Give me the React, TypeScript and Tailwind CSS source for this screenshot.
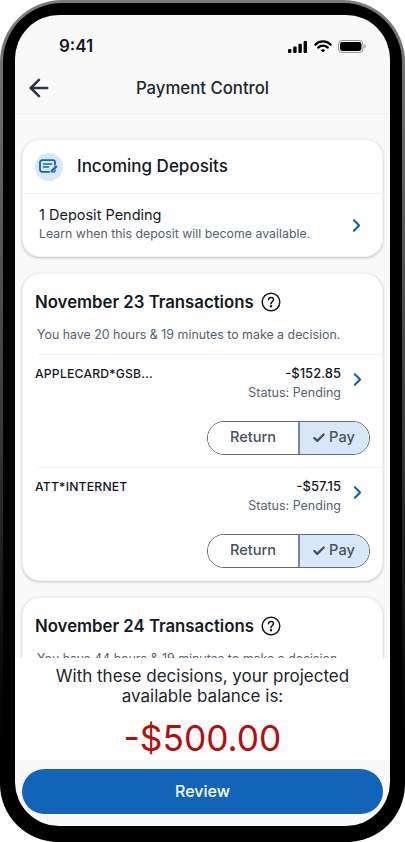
import { ArrowLeft, ChevronRight, Check } from 'lucide-react';

function StatusIcons() {
  return (
    <div className="flex items-center gap-[6px]">
      <svg width="20" height="12" viewBox="0 0 20 12" fill="#000">
        <rect x="0" y="8" width="3.4" height="4" rx="1" />
        <rect x="5.2" y="5.6" width="3.4" height="6.4" rx="1" />
        <rect x="10.4" y="2.8" width="3.4" height="9.2" rx="1" />
        <rect x="15.6" y="0" width="3.4" height="12" rx="1" />
      </svg>
      <svg width="18" height="13" viewBox="0 0 18 13" fill="none" stroke="#000" strokeWidth="2.2" strokeLinecap="round">
        <path d="M1.4 4.6C5.6 0.4 12.4 0.4 16.6 4.6" />
        <path d="M4.2 7.6C6.9 5 11.1 5 13.8 7.6" />
        <path d="M7.3 10.3 9 12 10.7 10.3C9.8 9.4 8.2 9.4 7.3 10.3Z" fill="#000" strokeWidth="1" />
      </svg>
      <svg width="28" height="13" viewBox="0 0 28 13" fill="none">
        <rect x="0.5" y="0.5" width="24.5" height="12" rx="3.6" stroke="#000" strokeOpacity="0.4" />
        <rect x="2" y="2" width="21.5" height="9" rx="2.4" fill="#000" />
        <path d="M26.4 4.6v3.8c.8-.3 1.3-1.1 1.3-1.9s-.5-1.6-1.3-1.9Z" fill="#000" fillOpacity="0.45" />
      </svg>
    </div>
  );
}

function DepositIcon() {
  return (
    <svg width="20" height="16" viewBox="0 0 20 16" fill="none">
      <rect x="1" y="1.2" width="15" height="11.6" rx="2" stroke="#1264b8" strokeWidth="1.8" />
      <path d="M4 5h9M4 8h6" stroke="#1264b8" strokeWidth="1.6" />
      <path d="M11 13.6l.6-2.6 5.4-5.2 2 2-5.4 5.2-2.6.6Z" fill="#1264b8" stroke="#d9e8f9" strokeWidth="0.7" />
    </svg>
  );
}

function HelpIcon() {
  return (
    <svg width="20" height="20" viewBox="0 0 20 20" fill="none" stroke="#14191f" strokeWidth="1.5" strokeLinecap="round">
      <circle cx="10" cy="10" r="8.8" />
      <path d="M7.5 7.8C7.6 6.4 8.7 5.6 10 5.6c1.4 0 2.5.9 2.5 2.2 0 1.9-2.5 1.9-2.5 3.9" />
      <circle cx="10" cy="14.3" r="0.5" fill="#14191f" />
    </svg>
  );
}

function Txn({ name, amount }: { name: string; amount: string }) {
  return (
    <div className="ml-[15px] border-t border-[#f0f1f2] pr-[12px] h-[113px] flex flex-col">
      <div className="flex justify-between -ml-[3px] pt-[9px]">
        <span className="text-[12.2px] leading-[19px] font-medium text-[#14191f] tracking-[0.2px]">{name}</span>
        <div className="flex">
          <div className="text-right">
            <div className="text-[13px] leading-[19px] font-medium text-[#14191f]">{amount}</div>
            <div className="text-[12.5px] leading-[19px] text-[#56616e]">Status: Pending</div>
          </div>
          <ChevronRight size={21} strokeWidth={2.3} className="text-[#0f5cad] ml-[6px] mt-[5px] mr-[2px]" />
        </div>
      </div>
      <div className="flex justify-end mt-[19px]">
        <div className="flex h-[34px] w-[163px] rounded-full border border-[#5f6b78] overflow-hidden text-[14.6px] text-[#46525f] font-medium">
          <div className="w-[90px] flex items-center justify-center bg-white">Return</div>
          <div className="flex-1 border-l-2 border-[#7b8693] flex items-center justify-center gap-[3px] bg-[#d9e8f9] pr-[2px]">
            <Check size={14} strokeWidth={4} />
            Pay
          </div>
        </div>
      </div>
    </div>
  );
}

function DayCard({ title, note, children }: { title: string; note: string; children?: React.ReactNode }) {
  return (
    <div className="bg-white rounded-[18px] border border-[#f2f2f3] shadow-[0_1px_3px_rgba(0,0,0,0.22)] overflow-hidden shrink-0">
      <div className="flex items-center gap-[7px] pl-[12px] pt-[8px] h-[47px]">
        <span className="text-[16.75px] leading-[22px] font-semibold text-[#14191f]">{title}</span>
        <HelpIcon />
      </div>
      <p className="pl-[14px] pt-[4px] pb-[9px] text-[12.4px] leading-[20px] text-[#56616e]">{note}</p>
      {children}
    </div>
  );
}

export default function App() {
  return (
    <div className="w-[405px] h-[842px] bg-white overflow-hidden font-['Inter',sans-serif]">
      <div className="h-[842px] rounded-[62px] rounded-b-[58px] p-[3px] pb-0 bg-gradient-to-b from-[#7d7d7d] via-[#3a3a3a] to-[#000]">
        <div className="h-full rounded-[59px] bg-black p-[12px] pb-[16px]">
          <div className="h-full w-[375px] rounded-[44px] overflow-hidden bg-[#f9f9f9] flex flex-col">
            {/* Status bar */}
            <div className="h-[54px] shrink-0 flex items-end justify-between pl-[44px] pr-[24px] pb-[12px]">
              <span className="text-[17px] leading-[22px] font-semibold text-[#14191f]">9:41</span>
              <div className="pb-[4px]">
                <StatusIcons />
              </div>
            </div>

            {/* Header */}
            <div className="h-[45px] shrink-0 relative flex items-center justify-center border-b border-[#f0f0f0]">
              <ArrowLeft size={28} strokeWidth={2.2} className="absolute left-[10px] top-[5px] text-[#2a3846]" />
              <span className="text-[16.75px] font-medium text-[#20262d] pb-[5px]">Payment Control</span>
            </div>

            {/* Scroll area */}
            <div className="flex-1 min-h-0 overflow-hidden px-[7px] pt-[25px] flex flex-col gap-[16px]">
              <div className="bg-white rounded-[18px] border border-[#f2f2f3] shadow-[0_1px_3px_rgba(0,0,0,0.22)] shrink-0">
                <div className="h-[54px] flex items-center gap-[14px] pl-[12px] border-b border-[#f0f1f2]">
                  <div className="w-[28px] h-[28px] rounded-full bg-[#d9e8f9] flex items-center justify-center">
                    <DepositIcon />
                  </div>
                  <span className="text-[17px] font-medium text-[#14191f]">Incoming Deposits</span>
                </div>
                <div className="h-[62px] flex items-center justify-between pl-[16px] pr-[15px]">
                  <div className="pb-[2px]">
                    <div className="text-[14.5px] leading-[20px] text-[#14191f]">1 Deposit Pending</div>
                    <div className="text-[12.35px] leading-[18px] text-[#56616e]">Learn when this deposit will become available.</div>
                  </div>
                  <ChevronRight size={21} strokeWidth={2.3} className="text-[#0f5cad]" />
                </div>
              </div>

              <DayCard title="November 23 Transactions" note="You have 20 hours & 19 minutes to make a decision.">
                <Txn name="APPLECARD*GSB..." amount="-$152.85" />
                <Txn name="ATT*INTERNET" amount="-$57.15" />
              </DayCard>

              <DayCard title="November 24 Transactions" note="You have 44 hours & 19 minutes to make a decision." />
            </div>

            {/* Projected balance */}
            <div className="h-[102px] shrink-0 bg-white flex flex-col items-center">
              <p className="text-[17px] leading-[20px] text-center text-[#20262d] pt-[8px] h-[48px]">
                With these decisions, your projected
                <br />
                available balance is:
              </p>
              <div className="text-[35.3px] leading-[44px] text-[#b80c0c] mt-[11px]">-$500.00</div>
            </div>

            {/* Review */}
            <div className="h-[66px] shrink-0 px-[7px] pt-[9px]">
              <div className="h-[45px] rounded-full bg-[#1264b8] flex items-center justify-center text-[16px] font-medium text-white pb-[2px]">
                Review
              </div>
            </div>
          </div>
        </div>
      </div>
    </div>
  );
}
